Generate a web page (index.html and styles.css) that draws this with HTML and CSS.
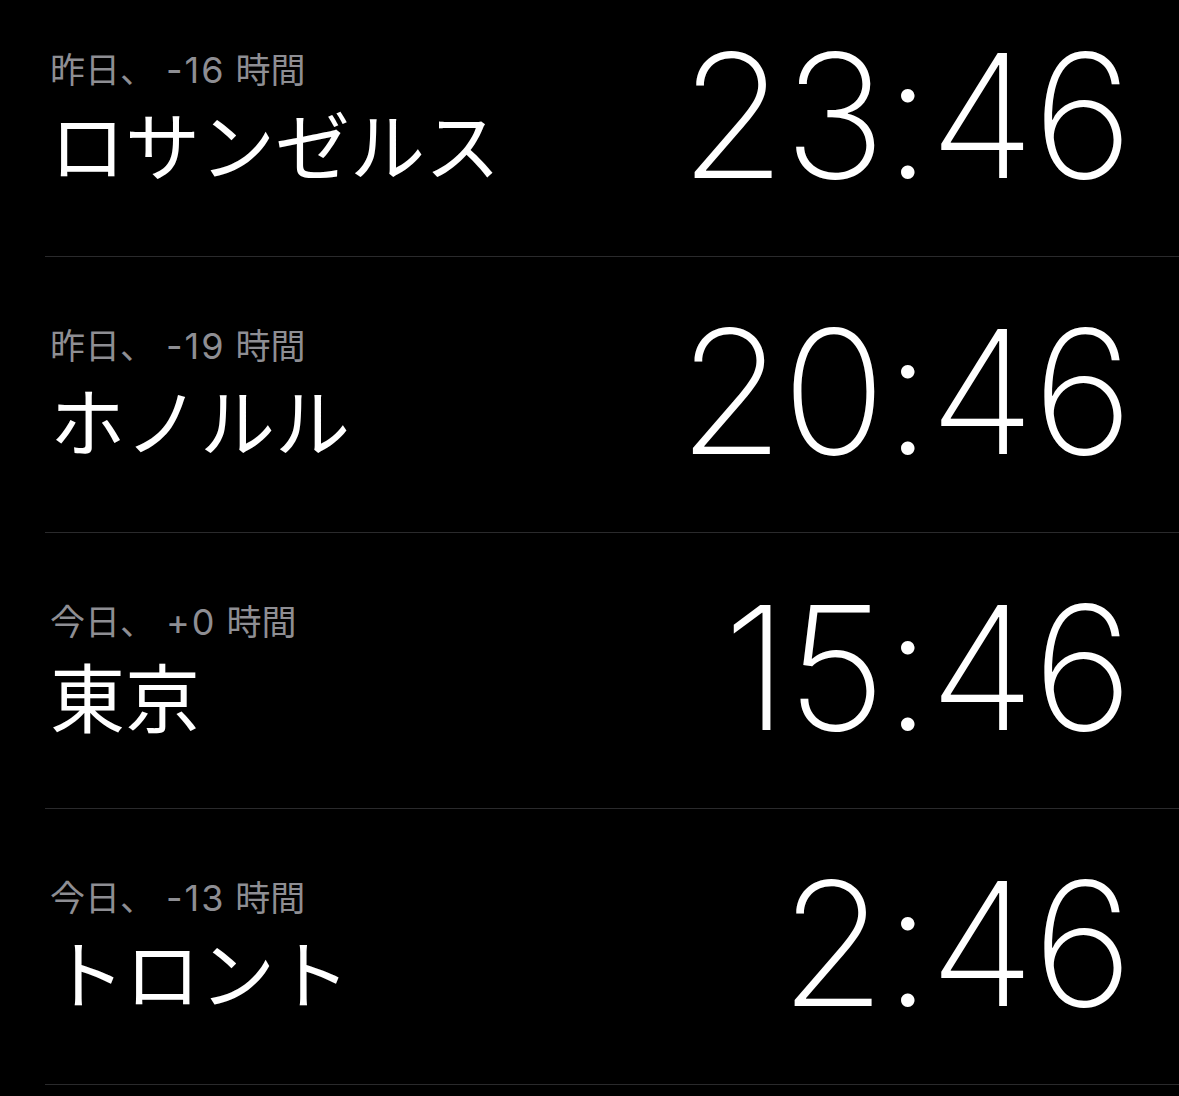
FILE: index.html
```html
<!DOCTYPE html>
<html lang="ja">
<head>
    <meta charset="UTF-8">
    <meta name="viewport" content="width=device-width, initial-scale=1.0">
    <title>世界時計</title>
    <link rel="stylesheet" href="styles.css">
</head>
<body>
    <ul class="clock-list">
        <li class="clock-row">
            <div class="clock-place">
                <div class="clock-offset">昨日、<span class="clock-hours">-16</span> 時間</div>
                <div class="clock-city">ロサンゼルス</div>
            </div>
            <div class="clock-time">23:46</div>
        </li>
        <li class="clock-row">
            <div class="clock-place">
                <div class="clock-offset">昨日、<span class="clock-hours">-19</span> 時間</div>
                <div class="clock-city">ホノルル</div>
            </div>
            <div class="clock-time">20:46</div>
        </li>
        <li class="clock-row">
            <div class="clock-place">
                <div class="clock-offset">今日、<span class="clock-hours">+0</span> 時間</div>
                <div class="clock-city">東京</div>
            </div>
            <div class="clock-time">15:46</div>
        </li>
        <li class="clock-row">
            <div class="clock-place">
                <div class="clock-offset">今日、<span class="clock-hours">-13</span> 時間</div>
                <div class="clock-city">トロント</div>
            </div>
            <div class="clock-time">2:46</div>
        </li>
    </ul>
</body>
</html>
```

FILE: styles.css
```css
body {
    margin: 0;
    background-color: black;
    color: white;
    font-family: Inter, "Noto Sans CJK JP", sans-serif;
    overflow: hidden;
}
.clock-list {
    list-style: none;
    margin: -19px 0 0 45px;
    padding: 0;
}
.clock-row {
    display: flex;
    justify-content: space-between;
    align-items: flex-start;
    height: 275px;
    padding: 0 48px 0 5px;
    border-bottom: 1px solid #2a2a2c;
}
.clock-place {
    padding-top: 67px;
}
.clock-offset {
    font-size: 35px;
    line-height: 44px;
    color: #8e8e93;
}
/* latin part of the offset sits apart from the kana */
.clock-hours {
    margin-left: 11px;
    font-size: 36px;
    letter-spacing: 2px;
}
.clock-city {
    font-size: 75px;
    line-height: 100px;
    margin-top: 6px;
}
.clock-time {
    font-size: 172px;
    font-weight: 200;
    line-height: 1;
    margin-top: 48px;
    letter-spacing: -2px;
}
```
